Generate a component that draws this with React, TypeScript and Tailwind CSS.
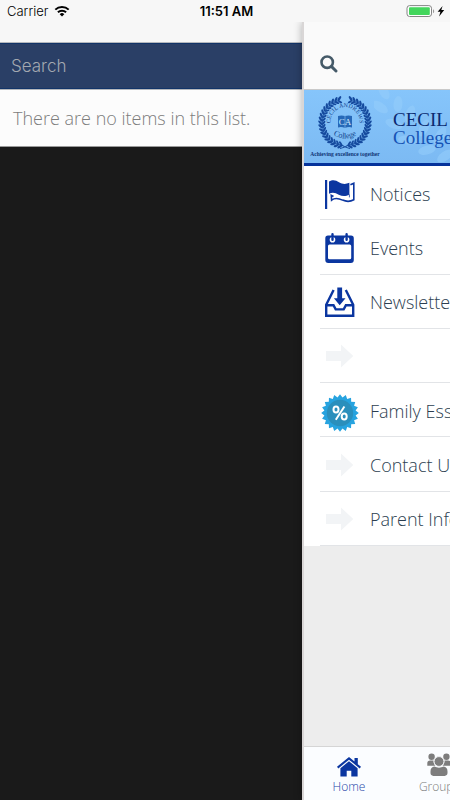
import type { ReactNode } from 'react';

type MenuItem = {
  label: string,
  icon: ReactNode
}

const BLUE = '#0b36a0';

// Position of a point on a circle, angle in degrees clockwise from the top
const polar = (cx: number, cy: number, r: number, angle: number) => {
  const rad = ((angle - 90) * Math.PI) / 180;
  return { x: cx + r * Math.cos(rad), y: cy + r * Math.sin(rad) };
}

function WifiIcon() {
  return (
    <svg className="h-3 w-4" viewBox="0 0 16 12" fill="none" stroke="#000" strokeWidth="2">
      <path d="M1.3 4.6a9.6 9.6 0 0 1 13.4 0" />
      <path d="M3.9 7.3a5.9 5.9 0 0 1 8.2 0" />
      <path d="M8 11.4 5.7 9.2a3.3 3.3 0 0 1 4.6 0z" fill="#000" stroke="none" />
    </svg>
  );
}

function BatteryIcon() {
  return (
    <svg className="h-3 w-10" viewBox="0 0 40 12">
      <rect x="1" y="0.6" width="24.5" height="10.9" rx="2.6" fill="#fff" stroke="#858585" strokeWidth="1" />
      <rect x="3" y="2.3" width="20.8" height="7.6" rx="1" fill="#43d65c" />
      <path d="M27 4.3c1.6.5 1.6 3.4 0 4z" fill="#9a9a9a" />
      <path d="M36.6 1 31.6 6.7h2.8l-1.3 4.8L38.2 5h-2.9z" fill="#000" />
    </svg>
  );
}

function SearchIcon() {
  return (
    <svg className="h-[18px] w-[18px]" viewBox="0 0 18 18" fill="none" stroke="#455a68">
      <circle cx="7.200" cy="7.200" r="5.700" strokeWidth="2.600" />
      <path d="m11.600 11.600 4.400 4.400" strokeWidth="2.900" strokeLinecap="round" />
    </svg>
  );
}

function FlagIcon() {
  return (
    <svg className="h-[30px] w-[30px]" viewBox="0 0 30 30" fill={BLUE}>
      <rect x="0" y="1" width="2.200" height="29" />
      <path d="M4 2.6C8 .2 11 1.4 14 3.2c3.4 2 6.5 2.300 10.400.6V15.400c-4 2.400-7.400 1.800-10.600.3C10.500 14 8 12.700 4 14.800z" />
      <path d="M25.400 5.800 28.800 4.200v16.600c-4.400 2.400-7.400 2-11.200.3-4.200-2-7.400-2.900-11 0l-.3-4.800 2.200 1.200" fill="none" stroke={BLUE} strokeWidth="1.600" />
      <path d="M24.400 15.400v3" stroke={BLUE} strokeWidth=".8" />
    </svg>
  );
}

function CalendarIcon() {
  return (
    <svg className="h-[30px] w-[30px]" viewBox="0 0 30 30">
      <path d="M3 2.600h23a2.800 2.800 0 0 1 2.800 2.800V27a3 3 0 0 1-3 3H3.300a3 3 0 0 1-3-3V5.400A2.800 2.800 0 0 1 3 2.600z" fill={BLUE} />
      <rect x="3" y="11.500" width="23.200" height="14.800" rx="1.500" fill="#fff" />
      <circle cx="7.500" cy="6.800" r="2.800" fill="#fff" />
      <circle cx="21.600" cy="6.800" r="2.800" fill="#fff" />
      <path d="M7.500 1.200v5.600M21.600 1.200v5.600" stroke={BLUE} strokeWidth="2.400" strokeLinecap="round" />
    </svg>
  );
}

function InboxIcon() {
  return (
    <svg className="h-[30px] w-[30px]" viewBox="0 0 30 30" fill="none" stroke={BLUE} strokeWidth="2.400">
      <path d="M8.600 3 1.200 17.800v10.900h27V17.800L20.800 3" />
      <path d="M1.200 18.200h7.300l2.200 4.200h8l2.200-4.200h7.300" />
      <path d="M12.300.4h4.800v10.800h3.400L14.700 18.200 8.900 11.200h3.400z" fill={BLUE} stroke="none" />
    </svg>
  );
}

function ArrowIcon() {
  return (
    <svg className="h-[30px] w-[30px]" viewBox="0 0 30 30">
      <path d="M1 10h15V3.500L28.300 15 16 26.500V20H1z" fill="#f2f4f6" />
    </svg>
  );
}

function PercentBadge() {
  const teeth = 20;
  const points = Array.from({ length: teeth * 2 }, (_, i) => {
    const p = polar(19, 19, i % 2 === 0 ? 18.8 : 15.8, (i * 180) / teeth);
    return `${p.x.toFixed(2)},${p.y.toFixed(2)}`;
  }).join(' ');

  return (
    <svg className="h-[42px] w-[38px] shrink-0" viewBox="0 -4 38 42">
      <polygon points={points} fill="#27a3df" />
      <circle cx="19" cy="19" r="13.200" fill="#2b8fbc" />
      <g fill="none" stroke="#fff" strokeWidth="2">
        <ellipse cx="15" cy="15.600" rx="2.500" ry="3" />
        <ellipse cx="23.200" cy="22.600" rx="2.500" ry="3" />
        <path d="M23.400 12.500 14.800 25.700" />
      </g>
    </svg>
  );
}

function HomeIcon() {
  return (
    <svg className="h-5 w-6" viewBox="0 0 24 20" fill={BLUE}>
      <path d="M12 0 0 9.800l1.300 1.600L12 2.700l10.700 8.700L24 9.800l-3.200-2.600V.9h-3.300v3.600z" />
      <path d="M12 4.200 3.400 11.200V19.500h6.300v-5.700h4.600v5.700h6.300v-8.300z" />
    </svg>
  );
}

function GroupIcon() {
  return (
    <svg className="h-6 w-6" viewBox="0 0 24 24" fill="#7d7d7d">
      <circle cx="4.600" cy="3.700" r="3.200" />
      <circle cx="19.400" cy="3.700" r="3.200" />
      <path d="M.3 12.800V10C.3 8.200 1.400 7.400 3 7.400h3.600c-.2 2.200.4 4 1.800 5.400zM23.700 12.800V10c0-1.800-1.100-2.600-2.700-2.600h-3.600c.2 2.200-.4 4-1.800 5.400z" />
      <circle cx="12" cy="8.500" r="4.900" stroke="#fbfdff" strokeWidth=".8" />
      <path d="M7.400 13.600c2.800 1.500 6.400 1.500 9.200 0 2.400.3 3.900 2 3.900 4.600v1.900c0 1.700-1.200 2.800-2.800 2.800H6.300c-1.600 0-2.800-1.100-2.800-2.800v-1.900c0-2.600 1.500-4.300 3.900-4.600z" />
    </svg>
  );
}

// One side of the laurel wreath, mirrored for the other side
function LaurelBranch() {
  return (
    <g>
      <path d="M37 55A22.800 22.800 0 0 1 35.100 10.500" fill="none" stroke="#1a4fa0" strokeWidth=".9" />
      {Array.from({ length: 19 }, (_, i) => {
        const angle = 192 + i * 8.6;
        const outer = polar(41, 32.5, 24.6, angle);
        const inner = polar(41, 32.5, 21.3, angle);
        return (
          <g key={i} fill="#154a9e">
            <ellipse rx="2.900" ry="1.200" transform={`translate(${outer.x} ${outer.y}) rotate(${angle - 42})`} />
            <ellipse rx="2.300" ry="1" transform={`translate(${inner.x} ${inner.y}) rotate(${angle + 42})`} />
          </g>
        );
      })}
    </g>
  );
}

function Crest() {
  return (
    <svg className="h-[73px] w-[82px] shrink-0" viewBox="0 0 82 73" fontFamily="'Liberation Serif', serif">
      <LaurelBranch />
      <g transform="translate(82 0) scale(-1 1)">
        <LaurelBranch />
      </g>
      <path d="M36 58.500c4-1 7-2 9-4.500M46 58.500c-4-1-7-2-9-4.500" fill="none" stroke="#164a9c" strokeWidth="1.200" />
      <path id="crest-top" d="M27.500 37A14.500 14.500 0 1 1 54.500 37" fill="none" />
      <path id="crest-bottom" d="M25 42Q41 55 57 42" fill="none" />
      <text fontSize="6" fill="#0f3f8c">
        <textPath href="#crest-top" startOffset="50%" textAnchor="middle">CECIL ANDREWS</textPath>
      </text>
      <text fontSize="8" fill="#0f3f8c">
        <textPath href="#crest-bottom" startOffset="50%" textAnchor="middle">College</textPath>
      </text>
      <path d="M34 26q3.500-1.200 7 0 3.500-1.200 7 0v11.500q-3.500-1-7 .5-3.500-1.500-7-.5z" fill="#2668b8" />
      <path d="M41 26v12" stroke="#8fc6f5" strokeWidth=".6" />
      <text x="41" y="35" fontSize="9" textAnchor="middle" fill="#d3eaff">CA</text>
      <text x="41" y="66" fontSize="5.5" fontWeight="bold" textAnchor="middle" fill="#0f3474">Achieving excellence together</text>
    </svg>
  );
}

const bannerLeaves = [
  { x: 6, y: 17, rx: 9, angle: 35 },
  { x: 10, y: 2, rx: 8, angle: 60 },
  { x: 24, y: 14, rx: 8, angle: 95 },
  { x: 20, y: 34, rx: 9, angle: 20 },
  { x: 36, y: 24, rx: 9, angle: 110 },
  { x: 34, y: 50, rx: 10, angle: 5 },
  { x: 50, y: 38, rx: 9, angle: 115 },
  { x: 53, y: 60, rx: 9, angle: -15 },
  { x: 66, y: 46, rx: 10, angle: 120 },
  { x: 71, y: 66, rx: 9, angle: -35 }
];

function BannerLeaves() {
  return (
    <svg className="absolute inset-y-0 left-[70px] h-[73px] w-[76px]" viewBox="0 0 76 73">
      <g fill="#94cdfb" opacity=".6">
        {bannerLeaves.map((leaf, i) => (
          <ellipse key={i} rx={leaf.rx} ry="4.500" transform={`translate(${leaf.x} ${leaf.y}) rotate(${leaf.angle})`} />
        ))}
      </g>
    </svg>
  );
}

const menuItems: MenuItem[] = [
  { label: 'Notices', icon: <FlagIcon /> },
  { label: 'Events', icon: <CalendarIcon /> },
  { label: 'Newsletters', icon: <InboxIcon /> },
  { label: '', icon: <ArrowIcon /> },
  { label: 'Family Essentials', icon: <PercentBadge /> },
  { label: 'Contact Us', icon: <ArrowIcon /> },
  { label: 'Parent Information', icon: <ArrowIcon /> }
];

function StatusBar() {
  return (
    <header className="grid h-[22px] shrink-0 grid-cols-3 items-center bg-[#f7f7f7] pl-[7px] pr-1 font-['Inter',sans-serif] text-[13px] leading-5 text-black">
      <div className="flex items-center gap-1.5">
        <span>Carrier</span>
        <WifiIcon />
      </div>
      <p className="text-center font-semibold">11:51 AM</p>
      <div className="flex justify-end">
        <BatteryIcon />
      </div>
    </header>
  );
}

function SearchPane() {
  return (
    <section className="flex min-w-0 flex-1 flex-col bg-[#1a1a1a]">
      <div className="h-5 bg-[#f7f7f7]" />
      <div className="border-y border-[#b5b8bd]">
        <input
          type="search"
          aria-label="Search"
          placeholder="Search"
          className="block h-[46px] w-full border-y border-[#123468] bg-[#2a3f66] px-[11px] font-['Inter',sans-serif] text-[17px] font-light text-white outline-none placeholder:text-[#a3a8b0]"
        />
      </div>
      <p className="h-[57px] truncate border-b border-[#9a9a9a] bg-[#fcfcfc] pl-[13px] text-lg leading-[56px] text-[#7d7d7d]">
        There are no items in this list.
      </p>
    </section>
  );
}

function MenuPane() {
  return (
    <aside className="z-10 flex w-[148px] shrink-0 flex-col overflow-hidden border-l-2 border-[#d9d6d6] bg-[#ededed] shadow-[0_0_8px_rgba(0,0,0,0.3)]">
      <div className="flex h-[68px] shrink-0 items-center border-b border-[#c9c9c9] bg-[#fafafa] px-4 pt-4">
        <button type="button" aria-label="Search menu">
          <SearchIcon />
        </button>
      </div>

      <div className="relative flex h-[76px] shrink-0 overflow-hidden border-b-3 border-[#06339b] bg-linear-to-b from-[#86c5fb] to-[#7cbaf3]">
        <BannerLeaves />
        <div className="relative flex">
          <Crest />
          <h1 className="pl-[7px] pt-[21px] font-['Liberation_Serif',serif] text-[19px] leading-[18px] font-normal whitespace-nowrap text-[#0a2a70]">
            <span className="block">CECIL ANDREWS</span>
            <span className="block text-[#1553b5]">College</span>
          </h1>
        </div>
      </div>

      <ul className="grid h-[380px] shrink-0 auto-rows-fr bg-white pl-4">
        {menuItems.map((item, index) => (
          <li key={index} className="border-b border-[#e2e4e7]">
            <a href="#" aria-label={item.label || 'Untitled'} className="flex h-full items-center pt-0.5 text-lg whitespace-nowrap text-[#2c3e50]">
              <span className="flex w-10 shrink-0 justify-center">{item.icon}</span>
              <span className="pl-2.5">{item.label}</span>
            </a>
          </li>
        ))}
      </ul>

      <nav className="mt-auto flex h-[54px] shrink-0 border-t border-[#d5d5d5] bg-[#fbfdff] text-xs leading-4">
        <a href="#" className="flex w-[90px] shrink-0 flex-col items-center text-[#2745a8]">
          <span className="flex h-8 items-end pb-0.5"><HomeIcon /></span>
          Home
        </a>
        <a href="#" className="flex w-[90px] shrink-0 flex-col items-center text-[#7d7d7d]">
          <span className="flex h-8 items-end pb-0.5"><GroupIcon /></span>
          Groups
        </a>
      </nav>
    </aside>
  );
}

export default function App() {
  return (
    <div className="flex h-screen flex-col overflow-hidden bg-[#1a1a1a] font-['Open_Sans',sans-serif] font-light">
      <StatusBar />
      <main className="flex min-h-0 flex-1 overflow-hidden">
        <SearchPane />
        <MenuPane />
      </main>
    </div>
  );
}
